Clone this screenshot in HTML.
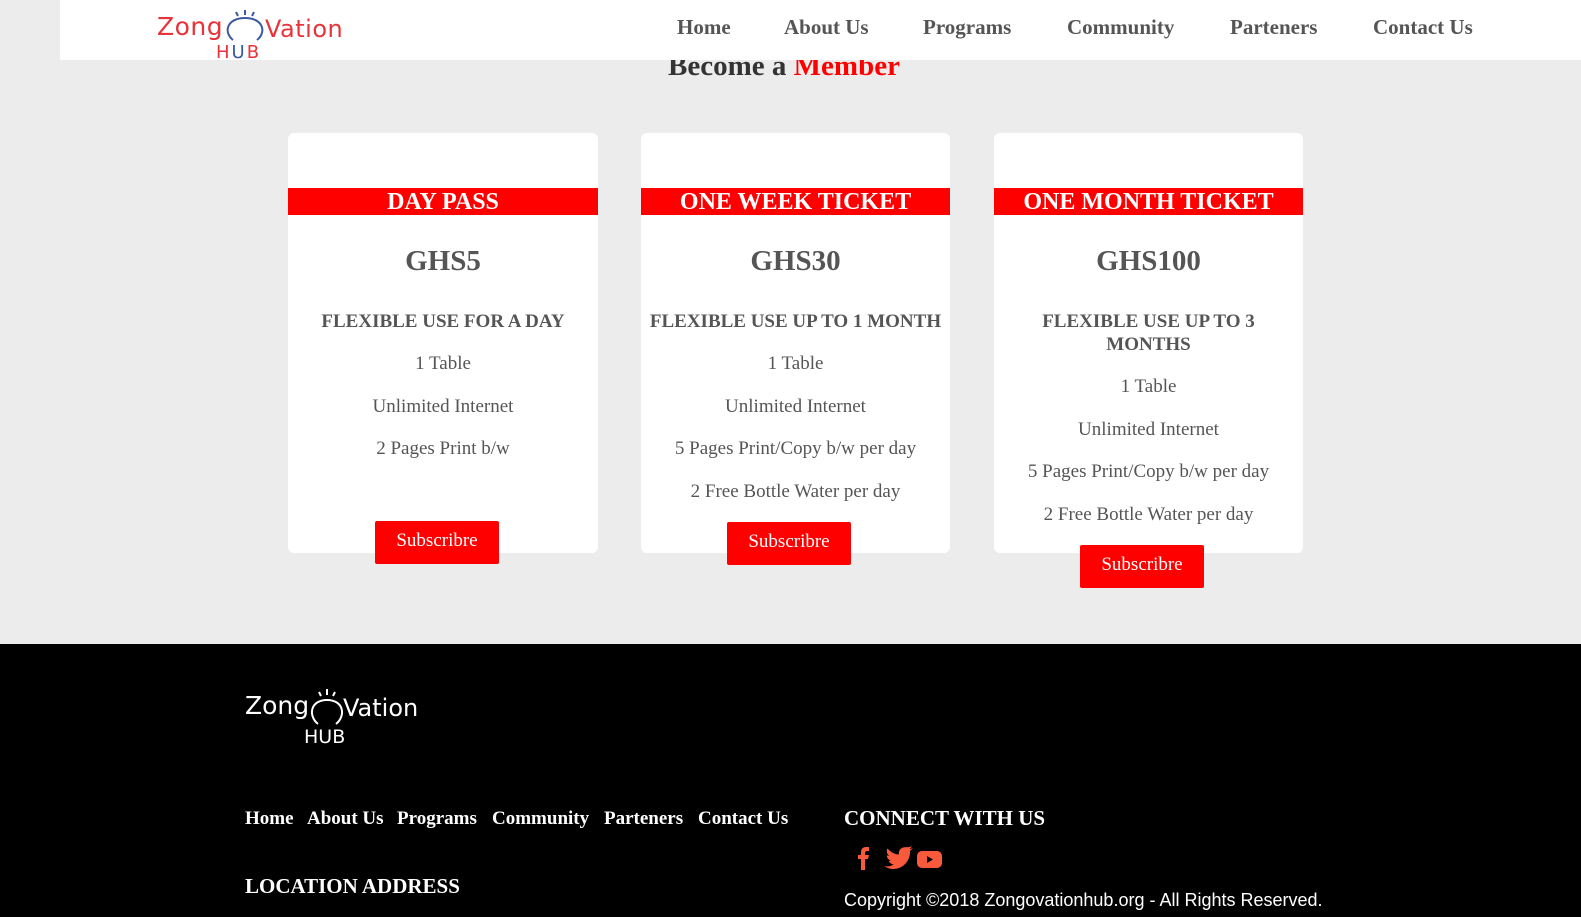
<!DOCTYPE html>
<html><head><meta charset="utf-8"><style>
*{margin:0;padding:0;box-sizing:border-box}
body{width:1581px;height:917px;overflow:hidden;background:#ececec;font-family:"Liberation Serif",serif;position:relative}
.abs{position:absolute}
#hdr{position:absolute;left:60px;top:0;width:1521px;height:60px;background:#fff;z-index:2}
.nav{position:absolute;top:15px;font-weight:bold;font-size:21px;color:#555}
h1{position:absolute;top:50px;left:0;width:1568px;text-align:center;font-size:29px;color:#333;font-weight:bold}
.card{position:absolute;top:133px;height:420px;background:#fff;border-radius:6px;color:#555;text-align:center}
.bar{position:absolute;top:55px;left:0;right:0;height:27px;background:#f00;color:#fff;font-weight:bold;font-size:24px;line-height:28px}
.price{position:absolute;top:112px;left:0;right:0;font-size:29px;font-weight:bold}
.lst{position:absolute;top:177px;left:0;right:0;font-size:19px}
.lst b{display:block;font-size:19px;margin-bottom:19px;line-height:23px}
.lst p{line-height:23px;margin-bottom:19.6px}
.btn{position:absolute;width:124px;height:43px;background:#f00;color:#fff;font-size:19px;text-align:center;line-height:40px;border-radius:2px}
#ft{position:absolute;left:0;top:644px;width:1581px;height:273px;background:#000;color:#fff}
.fl{position:absolute;top:164px;font-weight:bold;font-size:19px}
</style></head><body>
<div id="hdr">
 <div class="abs" style="left:97px;top:12px;font-family:'DejaVu Sans',sans-serif;font-size:25px;color:#e8333a;letter-spacing:0.5px">Zong</div>
 <svg class="abs" style="left:161px;top:8px" width="48" height="42" viewBox="0 0 48 42">
  <path d="M12 32 C2 24 6 10 24 10 C42 10 46 24 36 32" fill="none" stroke="#3a5aa0" stroke-width="2"/>
  <path d="M24 2v5M15 4l2 4M33 4l-2 4" stroke="#3a5aa0" stroke-width="2"/>
 </svg>
 <div class="abs" style="left:205px;top:15px;font-family:'DejaVu Sans',sans-serif;font-size:24px;color:#e8333a;letter-spacing:0.5px">Vation</div>
 <div class="abs" style="left:156px;top:42px;font-family:'DejaVu Sans',sans-serif;font-size:18px;color:#e8333a;letter-spacing:2px">H<span style="color:#3a5aa0">U</span>B</div>
 <div class="nav" style="left:617px">Home</div>
 <div class="nav" style="left:724px">About Us</div>
 <div class="nav" style="left:863px">Programs</div>
 <div class="nav" style="left:1007px">Community</div>
 <div class="nav" style="left:1170px">Parteners</div>
 <div class="nav" style="left:1313px">Contact Us</div>
</div>
<h1>Become a <span style="color:#f00">Member</span></h1>

<div class="card" style="left:288px;width:310px">
 <div class="bar">DAY PASS</div><div class="price">GHS5</div>
 <div class="lst"><b>FLEXIBLE USE FOR A DAY</b><p>1 Table</p><p>Unlimited Internet</p><p>2 Pages Print b/w</p></div>
</div>
<div class="card" style="left:641px;width:309px">
 <div class="bar">ONE WEEK TICKET</div><div class="price">GHS30</div>
 <div class="lst"><b>FLEXIBLE USE UP TO 1 MONTH</b><p>1 Table</p><p>Unlimited Internet</p><p>5 Pages Print/Copy b/w per day</p><p>2 Free Bottle Water per day</p></div>
</div>
<div class="card" style="left:994px;width:309px">
 <div class="bar">ONE MONTH TICKET</div><div class="price">GHS100</div>
 <div class="lst"><b>FLEXIBLE USE UP TO 3<br>MONTHS</b><p>1 Table</p><p>Unlimited Internet</p><p>5 Pages Print/Copy b/w per day</p><p>2 Free Bottle Water per day</p></div>
</div>
<div class="btn" style="left:375px;top:521px">Subscribre</div>
<div class="btn" style="left:727px;top:522px">Subscribre</div>
<div class="btn" style="left:1080px;top:545px">Subscribre</div>

<div id="ft">
 <div class="abs" style="left:245px;top:47px;font-family:'DejaVu Sans',sans-serif;font-size:25px">Zong</div>
 <svg class="abs" style="left:306px;top:42px" width="44" height="42" viewBox="0 0 44 42">
  <path d="M12 38 C2 30 4 14 21 14 C38 14 40 30 30 38" fill="none" stroke="#fff" stroke-width="2"/>
  <path d="M21 3v6M13 6l2 4M29 6l-2 4" stroke="#fff" stroke-width="2"/>
 </svg>
 <div class="abs" style="left:343px;top:50px;font-family:'DejaVu Sans',sans-serif;font-size:24px">Vation</div>
 <div class="abs" style="left:304px;top:82px;font-family:'DejaVu Sans',sans-serif;font-size:19px">HUB</div>
 <div class="fl" style="left:245px">Home</div>
 <div class="fl" style="left:307px">About Us</div>
 <div class="fl" style="left:397px">Programs</div>
 <div class="fl" style="left:492px">Community</div>
 <div class="fl" style="left:604px">Parteners</div>
 <div class="fl" style="left:698px">Contact Us</div>
 <div class="abs" style="left:844px;top:162px;font-weight:bold;font-size:21px">CONNECT WITH US</div>
 <svg class="abs" style="left:854px;top:202px" width="90" height="26" viewBox="0 0 90 26">
  <path d="M7 24V13H4V9h3V6c0-3 2-5 5-5h3v4h-2c-1 0-2 1-2 2v2h4l-1 4h-3v11z" fill="#fa5a3c"/>
  <g transform="translate(30,2) scale(1)">
  <path d="M0 18c3 2 6 3 9 3 11 0 17-9 17-17v-1c1-1 2-2 3-3-1 .5-2 .8-3.5 1 1-.7 2-2 2.5-3-1 .6-2.5 1-3.5 1.3C22 -1 18.5-1 16.5 1 15 2.5 14.5 4.5 15 6.5 10.5 6.3 6.5 4 3.5 .5 2 3 3 6.5 5.3 8c-.9 0-1.8-.3-2.5-.7 0 2.6 1.8 4.8 4.3 5.3-.8.2-1.6.3-2.4.1.7 2.1 2.7 3.6 5 3.7C7.7 18 4 19 0 18z" fill="#fa5a3c"/>
  </g>
  <rect x="63" y="5" width="25" height="17" rx="5" fill="#fa5a3c"/><path d="M73 10v7l6-3.5z" fill="#000"/>
 </svg>
 <div class="abs" style="left:245px;top:230px;font-weight:bold;font-size:21px">LOCATION ADDRESS</div>
 <div class="abs" style="left:844px;top:246px;font-family:'Liberation Sans',sans-serif;font-size:18px">Copyright ©2018 Zongovationhub.org - All Rights Reserved.</div>
</div>
</body></html>
